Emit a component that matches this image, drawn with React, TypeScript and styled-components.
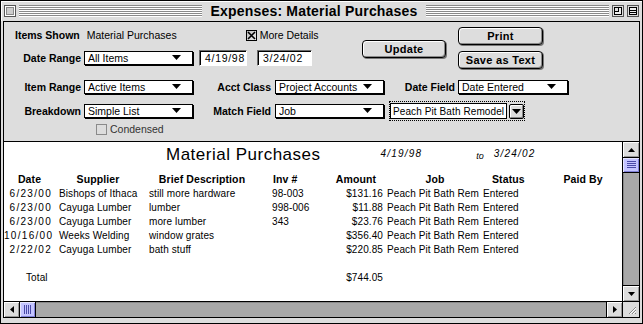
import React from "react";
import styled, { createGlobalStyle } from "styled-components";

const Global = createGlobalStyle`
  html, body { margin: 0; padding: 0; background: #ffffff; }
  body { width: 643px; height: 324px; overflow: hidden; font-family: "Liberation Sans", Arial, sans-serif; color: #000; }
`;

const Window = styled.div`
  width: 643px;
  height: 324px;
  box-sizing: border-box;
  border: 1px solid #000;
  background: #dddddd;
  display: flex;
  flex-direction: column;
`;

const TitleBar = styled.div`
  height: 20px;
  flex: none;
  display: flex;
  align-items: center;
  padding: 0 3px 0 3px;
  gap: 3px;
  background: #dddddd;
  box-shadow: inset 1px 1px 0 #ffffff;
`;

const Stripes = styled.div`
  flex: 1;
  height: 12px;
  background: repeating-linear-gradient(to bottom, #8a8a8a 0 1px, #ffffff 1px 2px);
`;

const WinTitle = styled.div`
  font-family: "Liberation Sans", Arial, sans-serif;
  font-weight: bold;
  font-size: 14px;
  letter-spacing: 0.2px;
  padding: 0 5px;
  white-space: nowrap;
`;

const BoxIcon = styled.svg`
  display: block;
  flex: none;
`;

const Frame = styled.div`
  flex: 1;
  display: flex;
  min-height: 0;
  padding: 0 2px 5px 2px;
`;

const Inner = styled.div`
  flex: 1;
  display: flex;
  flex-direction: column;
  border: 1px solid #000;
  min-height: 0;
  min-width: 0;
`;

const Controls = styled.div`
  height: 119px;
  flex: none;
  display: flex;
  flex-direction: column;
  font-size: 10.5px;
`;

const TopSection = styled.div`
  display: flex;
  height: 50px;
  flex: none;
`;

const LeftStack = styled.div`
  width: 358px;
  display: flex;
  flex-direction: column;
`;

const Line = styled.div<{ $top?: number; $h?: number }>`
  display: flex;
  align-items: center;
  height: ${(p) => p.$h ?? 16}px;
  margin-top: ${(p) => p.$top ?? 0}px;
  flex: none;
`;

const Label = styled.div<{ $w?: number; $ml?: number }>`
  font-weight: bold;
  font-size: 10.5px;
  white-space: nowrap;
  text-align: right;
  width: ${(p) => (p.$w ? `${p.$w}px` : "auto")};
  margin-left: ${(p) => p.$ml ?? 0}px;
  margin-right: 3px;
  flex: none;
`;

const Value = styled.div<{ $ml?: number }>`
  margin-left: ${(p) => p.$ml ?? 0}px;
  white-space: nowrap;
`;

const PopupBox = styled.div<{ $w: number; $ml?: number }>`
  width: ${(p) => p.$w}px;
  height: 14px;
  margin-left: ${(p) => p.$ml ?? 0}px;
  box-sizing: border-box;
  border: 1px solid #000;
  background: #fff;
  box-shadow: 1px 1px 0 #000;
  display: flex;
  align-items: center;
  padding: 0 11px 0 3px;
  flex: none;
  margin-bottom: 1px;
`;

const PopupText = styled.span`
  flex: 1;
  white-space: nowrap;
  overflow: hidden;
`;

const DownTri = () => (
  <svg width="9" height="5" viewBox="0 0 9 5" style={{ display: "block", flex: "none" }}>
    <polygon points="0,0 9,0 4.5,5" fill="#000" />
  </svg>
);

const Popup = ({ w, ml, children }: { w: number; ml?: number; children: React.ReactNode }) => (
  <PopupBox $w={w} $ml={ml}>
    <PopupText>{children}</PopupText>
    <DownTri />
  </PopupBox>
);

const EditField = styled.div<{ $w: number; $ml?: number }>`
  width: ${(p) => p.$w}px;
  height: 16px;
  margin-left: ${(p) => p.$ml ?? 0}px;
  box-sizing: border-box;
  border: 1px solid #6b6b6b;
  border-right-color: #ffffff;
  border-bottom-color: #ffffff;
  box-shadow: inset 1px 1px 0 #000;
  background: #fff;
  display: flex;
  align-items: center;
  padding-left: 5px;
  letter-spacing: 0.7px;
  flex: none;
`;

const CheckBox = styled.div<{ $disabled?: boolean; $ml?: number }>`
  width: 11px;
  height: 11px;
  box-sizing: border-box;
  margin-left: ${(p) => p.$ml ?? 0}px;
  margin-right: 3px;
  border: 1px solid ${(p) => (p.$disabled ? "#8a8a8a" : "#000")};
  background: ${(p) => (p.$disabled ? "#dddddd" : "linear-gradient(135deg, #bbbbbb, #eeeeee)")};
  display: flex;
  align-items: center;
  justify-content: center;
  flex: none;
`;

const CheckText = styled.span<{ $disabled?: boolean }>`
  font-size: 10.5px;
  color: ${(p) => (p.$disabled ? "#333" : "#000")};
  white-space: nowrap;
`;

const Button = styled.div<{ $w: number; $ml?: number; $mt?: number }>`
  width: ${(p) => p.$w}px;
  height: 18px;
  margin-left: ${(p) => p.$ml ?? 0}px;
  margin-top: ${(p) => p.$mt ?? 0}px;
  box-sizing: border-box;
  border: 1px solid #000;
  border-radius: 4px;
  background: #dddddd;
  box-shadow: inset 1px 1px 0 #ffffff, inset -1px -1px 0 #8a8a8a, 1px 1px 0 #777;
  display: flex;
  align-items: center;
  justify-content: center;
  font-weight: bold;
  font-size: 11px;
  letter-spacing: 0.3px;
  flex: none;
`;

const RightStack = styled.div`
  display: flex;
  flex-direction: column;
  gap: 6px;
  padding-top: 5px;
  margin-left: 12px;
`;

const ComboWrap = styled.div`
  margin-left: 5px;
  padding: 2px 1px 2px 1px;
  outline: 1px dotted #000;
  outline-offset: -1px;
  display: flex;
  align-items: center;
  gap: 2px;
  flex: none;
`;

const ComboField = styled.div`
  width: 117px;
  height: 16px;
  box-sizing: border-box;
  border: 1px solid #000;
  background: #fff;
  display: flex;
  align-items: center;
  padding-left: 2px;
  font-size: 10px;
  letter-spacing: 0.1px;
  white-space: nowrap;
  overflow: hidden;
`;

const ComboButton = styled.div`
  width: 15px;
  height: 15px;
  box-sizing: border-box;
  border: 1px solid #000;
  border-radius: 2px;
  background: #dddddd;
  box-shadow: inset 1px 1px 0 #fff, inset -1px -1px 0 #888;
  display: flex;
  align-items: center;
  justify-content: center;
`;

/* ---------- Report ---------- */

const ReportArea = styled.div`
  flex: 1;
  display: flex;
  flex-direction: column;
  border-top: 1px solid #000;
  min-height: 0;
`;

const ReportMain = styled.div`
  flex: 1;
  display: flex;
  min-height: 0;
`;

const ReportView = styled.div`
  flex: 1;
  background: #fff;
  overflow: hidden;
  font-size: 10px;
  min-width: 0;
`;

const ReportTitleRow = styled.div`
  height: 26px;
  display: flex;
  align-items: center;
  padding-left: 162px;
  white-space: nowrap;
`;

const ReportTitle = styled.div`
  font-size: 17px;
  letter-spacing: 0.5px;
`;

const RangeDate = styled.div<{ $ml: number }>`
  margin-left: ${(p) => p.$ml}px;
  font-style: italic;
  font-size: 10px;
  letter-spacing: 1.2px;
  margin-top: -3px;
`;

const RangeTo = styled.div<{ $ml: number }>`
  margin-left: ${(p) => p.$ml}px;
  font-style: italic;
  font-size: 9px;
  margin-top: 2px;
`;

const GridRow = styled.div<{ $mt?: number; $bold?: boolean }>`
  display: grid;
  grid-template-columns: 51px 86px 122px 62px 62px 96px 61px 78px;
  height: 14px;
  align-items: center;
  margin-top: ${(p) => p.$mt ?? 0}px;
  font-weight: ${(p) => (p.$bold ? "bold" : "normal")};
  font-size: ${(p) => (p.$bold ? "10.5px" : "10px")};
`;

type Align = "left" | "right" | "center";

const Cell = styled.div<{ $align?: Align; $pl?: number; $pr?: number; $wide?: boolean }>`
  text-align: ${(p) => p.$align ?? "left"};
  padding-left: ${(p) => p.$pl ?? 0}px;
  padding-right: ${(p) => p.$pr ?? 0}px;
  letter-spacing: ${(p) => (p.$wide ? "1.3px" : "0.1px")};
  white-space: nowrap;
`;

/* ---------- Scroll bars ---------- */

const VScroll = styled.div`
  width: 16px;
  flex: none;
  border-left: 1px solid #000;
  display: flex;
  flex-direction: column;
  background: #a8a8a8;
  box-shadow: inset 1px 0 0 #888;
`;

const HScrollRow = styled.div`
  height: 15px;
  flex: none;
  display: flex;
  border-top: 1px solid #000;
`;

const HScroll = styled.div`
  flex: 1;
  display: flex;
  background: #a8a8a8;
  box-shadow: inset 0 1px 0 #888;
`;

const Track = styled.div`
  flex: 1;
`;

const ArrowBox = styled.div<{ $side: "top" | "bottom" | "left" | "right" }>`
  flex: none;
  width: ${(p) => (p.$side === "left" || p.$side === "right" ? "15px" : "auto")};
  height: ${(p) => (p.$side === "top" || p.$side === "bottom" ? "15px" : "auto")};
  background: #dddddd;
  box-shadow: inset 1px 1px 0 #fff, inset -1px -1px 0 #999;
  display: flex;
  align-items: center;
  justify-content: center;
  border-${(p) => ({ top: "bottom", bottom: "top", left: "right", right: "left" }[p.$side])}: 1px solid #000;
`;

const Thumb = styled.div<{ $dir: "v" | "h" }>`
  flex: none;
  ${(p) => (p.$dir === "v" ? "height: 14px;" : "width: 15px;")}
  background: #c4c4ff;
  box-shadow: inset 1px 1px 0 #e6e6ff, inset -1px -1px 0 #8080d8;
  border-${(p) => (p.$dir === "v" ? "bottom" : "right")}: 1px solid #000;
  display: flex;
  align-items: center;
  justify-content: center;
`;

const GrowBox = styled.div`
  width: 16px;
  flex: none;
  border-left: 1px solid #000;
  background: #dddddd;
  display: flex;
  align-items: center;
  justify-content: center;
`;

const Arrow = ({ dir }: { dir: "up" | "down" | "left" | "right" }) => {
  const pts = {
    up: "0,4 7,4 3.5,0",
    down: "0,0 7,0 3.5,4",
    left: "4,0 4,7 0,3.5",
    right: "0,0 0,7 4,3.5",
  }[dir];
  const vert = dir === "up" || dir === "down";
  return (
    <svg width={vert ? 7 : 4} height={vert ? 4 : 7} viewBox={vert ? "0 0 7 4" : "0 0 4 7"} style={{ display: "block" }}>
      <polygon points={pts} fill="#000" />
    </svg>
  );
};

const Grip = ({ dir }: { dir: "v" | "h" }) =>
  dir === "v" ? (
    <svg width="9" height="8" viewBox="0 0 9 8" style={{ display: "block" }}>
      {[0, 2, 4, 6].map((y) => (
        <rect key={y} x="0" y={y} width="9" height="1" fill="#4a4aa8" />
      ))}
    </svg>
  ) : (
    <svg width="8" height="9" viewBox="0 0 8 9" style={{ display: "block" }}>
      {[0, 2, 4, 6].map((x) => (
        <rect key={x} x={x} y="0" width="1" height="9" fill="#4a4aa8" />
      ))}
    </svg>
  );

const rows = [
  ["6/23/00", "Bishops of Ithaca", "still more hardware", "98-003", "$131.16", "Peach Pit Bath Rem", "Entered"],
  ["6/23/00", "Cayuga Lumber", "lumber", "998-006", "$11.88", "Peach Pit Bath Rem", "Entered"],
  ["6/23/00", "Cayuga Lumber", "more lumber", "343", "$23.76", "Peach Pit Bath Rem", "Entered"],
  ["10/16/00", "Weeks Welding", "window grates", "", "$356.40", "Peach Pit Bath Rem", "Entered"],
  ["2/22/02", "Cayuga Lumber", "bath stuff", "", "$220.85", "Peach Pit Bath Rem", "Entered"],
];

export default function App() {
  return (
    <>
      <Global />
      <Window>
        <TitleBar>
          <BoxIcon width="12" height="12" viewBox="0 0 12 12">
            <rect x="0.5" y="0.5" width="11" height="11" fill="#dddddd" stroke="#555" />
            <rect x="1.5" y="1.5" width="9" height="9" fill="#bbbbbb" stroke="#fff" />
            <rect x="2.5" y="2.5" width="7" height="7" fill="#cccccc" stroke="#888" />
          </BoxIcon>
          <Stripes />
          <WinTitle>Expenses: Material Purchases</WinTitle>
          <Stripes />
          <BoxIcon width="12" height="12" viewBox="0 0 12 12">
            <rect x="0.5" y="0.5" width="11" height="11" fill="#dddddd" stroke="#555" />
            <rect x="2.5" y="2.5" width="7" height="7" fill="#eeeeee" stroke="#000" />
            <rect x="2.5" y="2.5" width="4" height="4" fill="#dddddd" stroke="#000" />
          </BoxIcon>
          <BoxIcon width="12" height="12" viewBox="0 0 12 12">
            <rect x="0.5" y="0.5" width="11" height="11" fill="#dddddd" stroke="#555" />
            <rect x="2.5" y="2.5" width="7" height="7" fill="#eeeeee" stroke="#000" />
            <line x1="2.5" y1="5.5" x2="9.5" y2="5.5" stroke="#000" />
            <line x1="2.5" y1="7.5" x2="9.5" y2="7.5" stroke="#000" />
          </BoxIcon>
        </TitleBar>
        <Frame>
          <Inner>
            <Controls>
              <TopSection>
                <LeftStack>
                  <Line $top={5} $h={16}>
                    <Label $ml={11}>Items Shown</Label>
                    <Value $ml={4}>Material Purchases</Value>
                    <CheckBox $ml={69}>
                      <svg width="9" height="9" viewBox="0 0 9 9" style={{ display: "block" }}>
                        <path d="M1 1 L8 8 M8 1 L1 8" stroke="#000" strokeWidth="1.6" />
                      </svg>
                    </CheckBox>
                    <CheckText>More Details</CheckText>
                  </Line>
                  <Line $top={7} $h={16}>
                    <Label $w={77}>Date Range</Label>
                    <Popup w={109}>All Items</Popup>
                    <EditField $w={48} $ml={6}>4/19/98</EditField>
                    <EditField $w={55} $ml={10}>3/24/02</EditField>
                  </Line>
                </LeftStack>
                <Button $w={84} $ml={0} $mt={18}>Update</Button>
                <RightStack>
                  <Button $w={85}>Print</Button>
                  <Button $w={85}>Save as Text</Button>
                </RightStack>
              </TopSection>
              <Line $top={7} $h={16}>
                <Label $w={77}>Item Range</Label>
                <Popup w={109}>Active Items</Popup>
                <Label $w={78}>Acct Class</Label>
                <Popup w={109} ml={1}>Project Accounts</Popup>
                <Label $w={71}>Date Field</Label>
                <Popup w={110}>Date Entered</Popup>
              </Line>
              <Line $top={7} $h={18}>
                <Label $w={77}>Breakdown</Label>
                <Popup w={109}>Simple List</Popup>
                <Label $w={78}>Match Field</Label>
                <Popup w={109} ml={1}>Job</Popup>
                <ComboWrap>
                  <ComboField>Peach Pit Bath Remodel Demo</ComboField>
                  <ComboButton>
                    <DownTri />
                  </ComboButton>
                </ComboWrap>
              </Line>
              <Line $top={2} $h={14}>
                <CheckBox $disabled $ml={92} />
                <CheckText $disabled>Condensed</CheckText>
              </Line>
            </Controls>
            <ReportArea>
              <ReportMain>
                <ReportView>
                  <ReportTitleRow>
                    <ReportTitle>Material Purchases</ReportTitle>
                    <RangeDate $ml={60}>4/19/98</RangeDate>
                    <RangeTo $ml={54}>to</RangeTo>
                    <RangeDate $ml={10}>3/24/02</RangeDate>
                  </ReportTitleRow>
                  <GridRow $mt={4} $bold>
                    <Cell $align="center">Date</Cell>
                    <Cell $align="center">Supplier</Cell>
                    <Cell $align="center">Brief Description</Cell>
                    <Cell $pl={10}>Inv #</Cell>
                    <Cell $align="center">Amount</Cell>
                    <Cell $align="center">Job</Cell>
                    <Cell $pl={9}>Status</Cell>
                    <Cell $align="center">Paid By</Cell>
                  </GridRow>
                  {rows.map((r, i) => (
                    <GridRow key={i}>
                      <Cell $align="right" $pr={3} $wide>{r[0]}</Cell>
                      <Cell $pl={4}>{r[1]}</Cell>
                      <Cell $pl={8}>{r[2]}</Cell>
                      <Cell $pl={9}>{r[3]}</Cell>
                      <Cell $align="right" $pr={4}>{r[4]}</Cell>
                      <Cell>{r[5]}</Cell>
                      <Cell>{r[6]}</Cell>
                      <Cell />
                    </GridRow>
                  ))}
                  <GridRow $mt={14}>
                    <Cell $pl={22}>Total</Cell>
                    <Cell />
                    <Cell />
                    <Cell />
                    <Cell $align="right" $pr={4}>$744.05</Cell>
                  </GridRow>
                </ReportView>
                <VScroll>
                  <ArrowBox $side="top"><Arrow dir="up" /></ArrowBox>
                  <Thumb $dir="v"><Grip dir="v" /></Thumb>
                  <Track />
                  <ArrowBox $side="bottom"><Arrow dir="down" /></ArrowBox>
                </VScroll>
              </ReportMain>
              <HScrollRow>
                <HScroll>
                  <ArrowBox $side="left"><Arrow dir="left" /></ArrowBox>
                  <Thumb $dir="h"><Grip dir="h" /></Thumb>
                  <Track />
                  <ArrowBox $side="right"><Arrow dir="right" /></ArrowBox>
                </HScroll>
                <GrowBox>
                  <svg width="11" height="11" viewBox="0 0 11 11" style={{ display: "block" }}>
                    <path d="M10 3 L3 10 M10 6 L6 10 M10 9 L9 10" stroke="#888" />
                    <path d="M10 4 L4 10 M10 7 L7 10" stroke="#fff" />
                  </svg>
                </GrowBox>
              </HScrollRow>
            </ReportArea>
          </Inner>
        </Frame>
      </Window>
    </>
  );
}
